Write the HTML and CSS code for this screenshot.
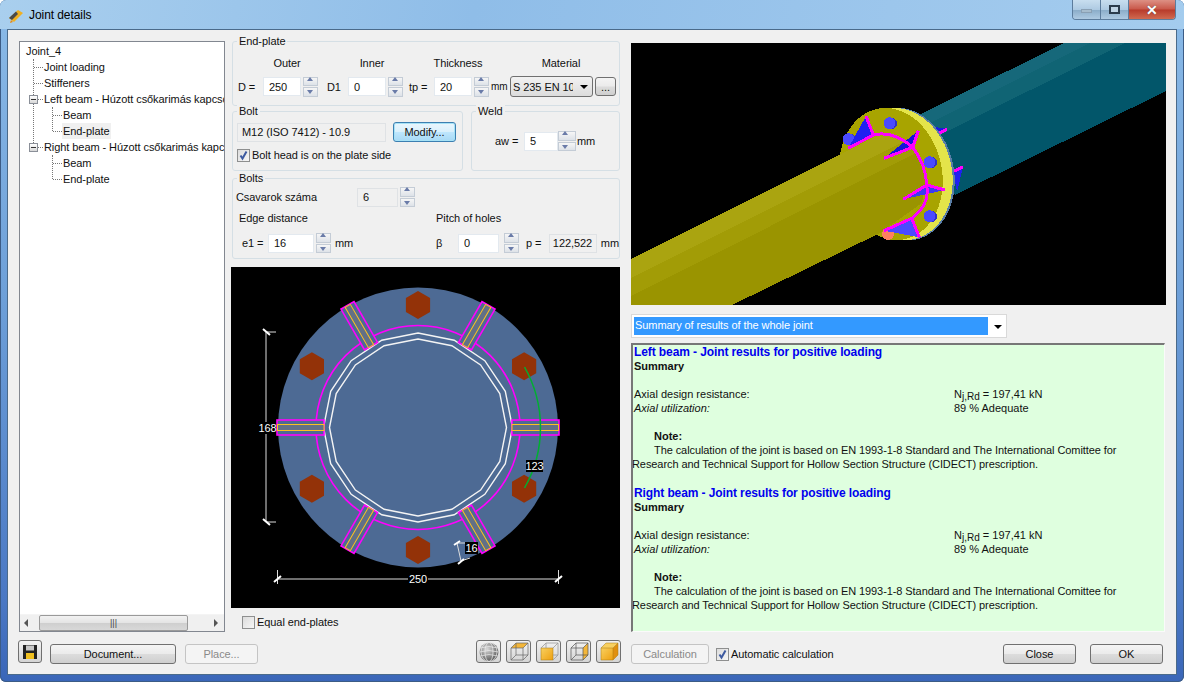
FILE: index.html
```html
<!DOCTYPE html>
<html lang="en">
<head>
<meta charset="utf-8">
<title>Joint details</title>
<link rel="stylesheet" href="styles.css">
</head>
<body>
<div class="window">
  <header class="titlebar">
    <svg class="app-icon" width="16" height="16" viewBox="0 0 16 16"><path d="M1 10 L10 2 L15 5 L6 14 Z" fill="#f0b020"/><path d="M1 10 L8 3.5 L10 6 L4 12 Z" fill="#4a4a4a"/><path d="M3 12 L5 14 L2 15 Z" fill="#e88a10"/></svg>
    <span class="title">Joint details</span>
    <div class="caption">
      <span class="cap cap-min"><i></i></span>
      <span class="cap cap-max"><i></i></span>
      <span class="cap cap-close">✕</span>
    </div>
  </header>
  <div class="client">
    <div class="main">
      <section class="tree">
        <div class="tree-body">
          <div class="node root">Joint_4</div>
          <ul class="lvl1">
            <li class="node">Joint loading</li>
            <li class="node">Stiffeners</li>
            <li class="node open"><span class="minus"></span>Left beam - Húzott csőkarimás kapcsolat</li>
            <li class="sub"><ul class="lvl2">
              <li class="node">Beam</li>
              <li class="node"><span class="selected">End-plate</span></li>
            </ul></li>
            <li class="node open"><span class="minus"></span>Right beam - Húzott csőkarimás kapcsolat</li>
            <li class="sub last"><ul class="lvl2">
              <li class="node">Beam</li>
              <li class="node">End-plate</li>
            </ul></li>
          </ul>
        </div>
        <div class="hscroll">
          <span class="arr arr-l"></span>
          <span class="thumb">|||</span>
          <span class="arr arr-r"></span>
        </div>
      </section>

      <section class="middle">
        <fieldset class="group g-end">
          <span class="legend">End-plate</span>
          <div class="heads">
            <span class="h-outer">Outer</span><span class="h-inner">Inner</span><span class="h-thick">Thickness</span><span class="h-mat">Material</span>
          </div>
          <div class="row r-end">
            <label class="l-d">D =</label>
            <input class="inp i38" value="250"><span class="spin"><b class="up"></b><b class="dn"></b></span>
            <label class="l-d1">D1</label>
            <input class="inp i38" value="0"><span class="spin"><b class="up"></b><b class="dn"></b></span>
            <label class="l-tp">tp =</label>
            <input class="inp i38" value="20"><span class="spin"><b class="up"></b><b class="dn"></b></span>
            <label class="l-mm">mm</label>
            <span class="combo-mat"><span class="combo-text">S 235 EN 10025</span><i class="caret"></i></span>
            <button class="btn dots">...</button>
          </div>
        </fieldset>

        <div class="pair">
          <fieldset class="group g-bolt">
            <span class="legend">Bolt</span>
            <div class="row">
              <span class="field f-bolt">M12 (ISO 7412) - 10.9</span>
              <button class="btn modify">Modify...</button>
            </div>
            <label class="check c-bolt"><span class="box"><svg class="tick" width="11" height="11" viewBox="0 0 11 11"><path d="M2.500 5.500 L4.500 8.500 L8.500 1.500"/></svg></span>Bolt head is on the plate side</label>
          </fieldset>
          <fieldset class="group g-weld">
            <span class="legend">Weld</span>
            <div class="row">
              <label class="l-aw">aw =</label>
              <input class="inp i34" value="5"><span class="spin spin-tight"><b class="up"></b><b class="dn"></b></span>
              <label class="l-mm2">mm</label>
            </div>
          </fieldset>
        </div>

        <fieldset class="group g-bolts">
          <span class="legend">Bolts</span>
          <div class="row r-count">
            <label class="l-count">Csavarok száma</label>
            <span class="field f-count">6</span><span class="spin"><b class="up"></b><b class="dn"></b></span>
          </div>
          <div class="row r-sub">
            <span class="s-edge">Edge distance</span><span>Pitch of holes</span>
          </div>
          <div class="row r-e1">
            <label class="l-e1">e1 =</label>
            <input class="inp i46" value="16"><span class="spin"><b class="up"></b><b class="dn"></b></span>
            <label class="l-mm3">mm</label>
            <label class="l-beta">β</label>
            <input class="inp i41" value="0"><span class="spin spin-wide"><b class="up"></b><b class="dn"></b></span>
            <label class="l-p">p =</label>
            <span class="field f-p">122,522</span>
            <label class="l-mm4">mm</label>
          </div>
        </fieldset>

        <svg class="plate" width="389" height="341" viewBox="231 267 389 341">
          <defs>
            <g id="stiff">
              <rect x="512" y="420" width="47" height="15" fill="#4d6a94" stroke="#ff00ff" stroke-width="1.600"/>
              <rect x="512" y="424.500" width="46.500" height="6" fill="#627086" stroke="#ffc020" stroke-width="1"/>
            </g>
            <polygon id="hex" points="0,-14 12.1,-7 12.1,7 0,14 -12.1,7 -12.1,-7" fill="#933208"/>
          </defs>
          <rect x="231" y="267" width="389" height="341" fill="#000"/>
          <circle cx="418" cy="427.500" r="140" fill="#4d6a94"/>
          <circle cx="418" cy="427.500" r="102" fill="none" stroke="#ff00ff" stroke-width="1.600"/>
          <polygon class="white-line" points="418,333 454.2,340.2 484.8,360.7 505.3,391.3 512.5,427.5 505.3,463.7 484.8,494.3 454.2,514.8 418,522 381.8,514.8 351.2,494.3 330.7,463.7 323.5,427.5 330.7,391.3 351.2,360.7 381.8,340.2"/>
          <polygon class="white-line" points="418,339 451.9,345.7 480.6,364.9 499.8,393.6 506.5,427.5 499.8,461.4 480.6,490.1 451.9,509.3 418,516 384.1,509.3 355.4,490.1 336.2,461.4 329.5,427.5 336.2,393.6 355.4,364.9 384.1,345.7"/>
          <use href="#stiff"/>
          <use href="#stiff" transform="rotate(60 418 427.5)"/>
          <use href="#stiff" transform="rotate(120 418 427.5)"/>
          <use href="#stiff" transform="rotate(180 418 427.5)"/>
          <use href="#stiff" transform="rotate(240 418 427.5)"/>
          <use href="#stiff" transform="rotate(300 418 427.5)"/>
          <use href="#hex" x="418" y="305"/>
          <use href="#hex" x="524.1" y="366.2"/>
          <use href="#hex" x="524.1" y="488.8"/>
          <use href="#hex" x="418" y="550"/>
          <use href="#hex" x="311.9" y="488.8"/>
          <use href="#hex" x="311.9" y="366.2"/>
          <path d="M524.500 367 A122.500 122.500 0 0 1 524.500 488" fill="none" stroke="#00b030" stroke-width="1.500"/>
          <g class="dim">
            <path d="M266 332 V522 M266 332 H276 M266 522 H276"/>
            <path d="M277.500 579 H558.500 M277.500 570 V584 M558.500 570 V584"/>
            <path d="M457 543 L461 561 M457 543 H465 M461 561 L470 558"/>
          </g>
          <g class="ticks">
            <path d="M263 329 L270 335 M263 519 L270 525"/>
            <path d="M274 582 L281 576 M555 582 L562 576"/>
            <path d="M454 545 L460 541 M458 564 L464 559"/>
          </g>
          <rect class="lbl-bg" x="259" y="422" width="17" height="12"/>
          <text class="lbl" x="267.500" y="432" text-anchor="middle">168</text>
          <rect class="lbl-bg" x="408" y="573" width="20" height="12"/>
          <text class="lbl" x="418" y="583" text-anchor="middle">250</text>
          <rect class="lbl-bg" x="526" y="460" width="17" height="12"/>
          <text class="lbl" x="534.500" y="470" text-anchor="middle">123</text>
          <rect class="lbl-bg" x="465" y="542" width="13" height="12"/>
          <text class="lbl" x="471.500" y="552" text-anchor="middle">16</text>
        </svg>

        <label class="check c-equal"><span class="box"></span>Equal end-plates</label>
      </section>

      <section class="right">
        <svg class="view3d" width="535" height="262" viewBox="631 43 535 262">
          <rect x="631" y="43" width="535" height="262" fill="#000"/>
          <polygon points="916.700,116 1064,43 1166,43 1166,91 955,195" fill="#02566a"/>
          <polygon points="916.700,116 1064,43 1125,43 930,140" fill="#106474"/>
          <polygon points="916.700,116 1064,43 1090,43 922,127" fill="#16687a"/>
          <polygon points="930,127 945,128 936,135" fill="#1a1ae0"/>
          <polygon points="953,170 963,167 957,192" fill="#2020f0"/>
          <path d="M936 135 L947 129 M954 171 L963 167" stroke="#ff00ff" stroke-width="3"/>
          <ellipse cx="902" cy="174" rx="52" ry="67" transform="rotate(-12 902 174)" fill="#5a7ea8"/>
          <ellipse cx="900" cy="174" rx="52" ry="66.600" transform="rotate(-12 900 174)" fill="#e4e44a"/>
          <ellipse cx="891" cy="174" rx="51" ry="66.600" transform="rotate(-12 891 174)" fill="#a8a400"/>
          <circle cx="850" cy="139.500" r="6" fill="#3030c8"/><circle cx="848.500" cy="139.300" r="6" fill="#4a4aff"/>
          <circle cx="891" cy="123.500" r="6" fill="#3030c8"/><circle cx="889.500" cy="123.300" r="6" fill="#4a4aff"/>
          <circle cx="931" cy="162.500" r="6" fill="#3030c8"/><circle cx="929.500" cy="162.300" r="6" fill="#4a4aff"/>
          <circle cx="931" cy="216.500" r="6" fill="#3030c8"/><circle cx="929.500" cy="216.300" r="6" fill="#4a4aff"/>
          <circle cx="888" cy="234" r="6" fill="#ff8060"/>
          <polygon points="631,259 875,137 893,133 913,147 926,177 922,203 880,233 732,305 631,305" fill="#9a9400"/>
          <polygon points="631,259 875,137 893,133 913,147 918,152 631,296" fill="#a29c06"/>
          <polygon points="631,259 875,137 893,133 905,141 631,278" fill="#aaa410"/>
          <polygon points="866,116 873.300,135 848.300,148.300" fill="#2020f0"/>
          <polygon points="918.300,130.700 912.700,147.300 884,158.300" fill="#1414d8"/>
          <polygon points="945,190 926.700,185 903.300,199.300" fill="#3a3af0"/>
          <polygon points="911.700,218.300 919.300,237.300 884,230.700" fill="#4a4aff"/>
          <g class="weld">
            <path d="M866 116 L873.300 135 L848.300 148.300"/>
            <path d="M918.300 130.700 L912.700 147.300 L884 158.300"/>
            <path d="M945 190 L926.700 185 L903.300 199.300"/>
            <path d="M911.700 218.300 L919.300 237.300 M911.700 218.300 L884 230.700"/>
            <path d="M873.300 135 Q893 130 912.700 147.300 Q926 165 926.700 185 Q930 205 911.700 218.300"/>
          </g>
        </svg>

        <div class="summary-combo">
          <span class="summary-sel">Summary of results of the whole joint</span>
          <i class="caret"></i>
        </div>

        <article class="results">
          <h2>Left beam - Joint results for positive loading</h2>
          <h3>Summary</h3>
          <div class="res-row res-gap"><span>Axial design resistance:</span><span>N<sub>j,Rd</sub> = 197,41 kN</span></div>
          <div class="res-row"><em>Axial utilization:</em><span>89 % Adequate</span></div>
          <h3 class="note">Note:</h3>
          <p>The calculation of the joint is based on EN 1993-1-8 Standard and The International Comittee for Research and Technical Support for Hollow Section Structure (CIDECT) prescription.</p>
          <h2 class="second">Right beam - Joint results for positive loading</h2>
          <h3>Summary</h3>
          <div class="res-row res-gap"><span>Axial design resistance:</span><span>N<sub>j,Rd</sub> = 197,41 kN</span></div>
          <div class="res-row"><em>Axial utilization:</em><span>89 % Adequate</span></div>
          <h3 class="note">Note:</h3>
          <p>The calculation of the joint is based on EN 1993-1-8 Standard and The International Comittee for Research and Technical Support for Hollow Section Structure (CIDECT) prescription.</p>
        </article>
      </section>
    </div>

    <footer class="footer">
      <button class="iconbtn save">
        <svg width="16" height="16" viewBox="0 0 16 16"><path d="M1 1 H15 V15 H1 Z" fill="#222"/><rect x="4" y="1.500" width="8" height="5" fill="#c8c8c8"/><rect x="4" y="9" width="8" height="6" fill="#f0c020"/></svg>
      </button>
      <button class="btn b-doc">Document...</button>
      <button class="btn b-place" disabled>Place...</button>
      <div class="views">
        <button class="iconbtn">
          <svg width="20" height="20" viewBox="0 0 20 20"><defs><radialGradient id="sph" cx="0.4" cy="0.35" r="0.7"><stop offset="0" stop-color="#d8d8d8"/><stop offset="1" stop-color="#555"/></radialGradient></defs><circle cx="10" cy="10" r="9.500" fill="url(#sph)"/><g fill="none" stroke="#eee" stroke-width="0.7"><ellipse cx="10" cy="10" rx="4" ry="9.500"/><ellipse cx="10" cy="10" rx="8" ry="9.500"/><path d="M1 6 Q10 3 19 6 M0.500 10 Q10 7 19.500 10 M1 14 Q10 11 19 14"/></g></svg>
        </button>
        <button class="iconbtn">
          <svg width="20" height="20" viewBox="0 0 20 20"><polygon points="2,6 7,1 19,1 14,6" fill="#f3b63a"/><path d="M2 6 H14 V18 H2 Z M14 6 L19 1 V13 L14 18 M2 6 L7 1 H19 M7 1 V13 H19 M2 18 L7 13" fill="none" stroke="#666" stroke-width="0.7"/></svg>
        </button>
        <button class="iconbtn">
          <svg width="20" height="20" viewBox="0 0 20 20"><defs><linearGradient id="gold" x1="0" y1="0" x2="1" y2="1"><stop offset="0" stop-color="#f8d060"/><stop offset="1" stop-color="#eea010"/></linearGradient></defs><rect x="2" y="6" width="12" height="12" fill="url(#gold)" stroke="#a87810" stroke-width="0.5"/><path d="M2 6 L7 1 H19 V13 L14 18 M14 6 L19 1 M7 1 V6 M14 13 H19" fill="none" stroke="#999" stroke-width="0.8"/></svg>
        </button>
        <button class="iconbtn">
          <svg width="20" height="20" viewBox="0 0 20 20"><polygon points="14,6 19,1 19,13 14,18" fill="#f3b63a"/><path d="M2 6 H14 V18 H2 Z M14 6 L19 1 V13 L14 18 M2 6 L7 1 H19 M7 1 V13 H19 M2 18 L7 13" fill="none" stroke="#555" stroke-width="0.7"/></svg>
        </button>
        <button class="iconbtn">
          <svg width="20" height="20" viewBox="0 0 20 20"><polygon points="2,6 7,1 19,1 14,6" fill="#f8d060"/><polygon points="14,6 19,1 19,13 14,18" fill="#e09010"/><rect x="2" y="6" width="12" height="12" fill="url(#gold)"/><path d="M2 6 L7 1 H19 V13 L14 18 H2 Z M2 6 H14 V18 M14 6 L19 1" fill="none" stroke="#a87810" stroke-width="0.5"/></svg>
        </button>
      </div>
      <button class="btn b-calc" disabled>Calculation</button>
      <label class="check c-auto"><span class="box"><svg class="tick" width="11" height="11" viewBox="0 0 11 11"><path d="M2.500 5.500 L4.500 8.500 L8.500 1.500"/></svg></span>Automatic calculation</label>
      <button class="btn b-close">Close</button>
      <button class="btn b-ok">OK</button>
    </footer>
  </div>
</div>
</body>
</html>
```

FILE: styles.css
```css
* { box-sizing: border-box; }
html, body { margin: 0; padding: 0; }
body { width: 1184px; height: 682px; overflow: hidden; background: #fff; font: 11px "Liberation Sans", Arial, sans-serif; letter-spacing: -0.07px; color: #111; }
input, button { font: inherit; color: inherit; margin: 0; letter-spacing: inherit; }
label { display: block; }

.window { width: 1184px; height: 682px; display: flex; flex-direction: column; border-radius: 6px; overflow: hidden; box-shadow: inset 0 0 0 1px #3c5c86;
  background: linear-gradient(180deg, #a9cfee 0, #88b8e6 28px, #6d9fd8 300px, #4a78c4 600px, #3a66b8 682px); }

.titlebar { height: 29px; flex: none; display: flex; align-items: flex-start; position: relative;
  background: linear-gradient(100deg, #a9cfee 0, #8fbde8 40%, #9cc6ec 75%, #a4ccee 100%); }
.app-icon { margin: 8px 0 0 8px; }
.title { margin: 8px 0 0 5px; font-size: 12px; line-height: 15px; color: #000; }
.caption { margin: 0 8px 0 auto; display: flex; height: 20px; border: 1px solid #5c7c9c; border-top: 0; border-radius: 0 0 4px 4px; overflow: hidden; }
.cap { display: flex; align-items: center; justify-content: center; }
.cap-min, .cap-max { width: 28px; border-right: 1px solid #5c7c9c; background: linear-gradient(180deg, #c8deef 0, #aecae2 50%, #8aacc8 52%, #aecae2 100%); }
.cap-min i { width: 11px; height: 4px; background: #a6bccd; border: 1px solid #8aa0b4; margin-top: 2px; }
.cap-max i { width: 11px; height: 9px; border: 2px solid #2c3c4c; background: #c0d4e4; }
.cap-close { width: 46px; color: #fff; font-size: 14px; font-weight: bold; text-shadow: 0 0 1px #333;
  background: linear-gradient(180deg, #dd9084 0, #c9584a 48%, #b83a2a 52%, #d06a50 100%); }

.client { flex: 1; margin: 0 7px 7px; background: #f0f0f0; border: 1px solid #4a6a8a; padding: 11px 13px 0 11px; }
.main { display: grid; grid-template-columns: 206px 396px 545px; column-gap: 0; height: 591px; }

/* tree */
.tree { display: flex; flex-direction: column; background: #fff; border: 1px solid #828790; height: 591px; width: 206px; }
.tree-body { flex: 1; overflow: hidden; white-space: nowrap; padding-top: 1px; }
.tree ul { list-style: none; margin: 0; padding: 0; }
.node { height: 16px; line-height: 16px; position: relative; }
.root { padding-left: 6px; }
.lvl1 { padding-left: 24px !important; position: relative; }
.lvl1::before { content: ""; position: absolute; left: 13px; top: 0; height: 88px; border-left: 1px dotted #777; }
.lvl1 > .node::before { content: ""; position: absolute; left: -10px; top: 8px; width: 9px; border-top: 1px dotted #777; }
.lvl2 { padding-left: 19px !important; position: relative; }
.lvl2::before { content: ""; position: absolute; left: 8px; top: 0; height: 24px; border-left: 1px dotted #777; }
.lvl2 > .node::before { content: ""; position: absolute; left: -10px; top: 8px; width: 9px; border-top: 1px dotted #777; }
.minus { position: absolute; left: -15px; top: 4px; width: 9px; height: 9px; border: 1px solid #8a8f98; background: linear-gradient(#fff, #d8d8d8); z-index: 1; }
.minus::after { content: ""; position: absolute; left: 1px; top: 3px; width: 5px; height: 1px; background: #333; }
.selected { background: #f0f0f0; display: inline-block; padding: 0 2px 0 1px; margin-left: -1px; }

.hscroll { flex: none; height: 17px; background: #f0f0f0; display: flex; align-items: center; position: relative; border-top: 1px solid #f4f4f4; }
.thumb { position: absolute; left: 19px; width: 149px; height: 16px; top: 0; border: 1px solid #9a9a9a; border-radius: 2px; text-align: center; font-size: 9px; line-height: 14px; color: #444;
  background: linear-gradient(180deg, #f2f2f2 0, #e4e4e4 50%, #cfcfcf 52%, #d8d8d8 100%); }
.arr { position: absolute; top: 4px; width: 0; height: 0; border: 4px solid transparent; }
.arr-l { left: 4px; border-left: 0; border-right-color: #555; }
.arr-r { right: 6px; border-right: 0; border-left-color: #555; }

/* form column */
.middle { display: flex; flex-direction: column; padding-left: 6px; }
.group { position: relative; margin: 0 0 0 1px; border: 1px solid #d5dfe5; border-radius: 3px; padding: 0; min-width: 0; flex: none; }
.legend { position: absolute; left: 4px; top: -7px; background: #f0f0f0; padding: 0 2px; line-height: 13px; }
.row { display: flex; align-items: center; }

.g-end { width: 388px; height: 65px; padding-top: 14px; }
.heads { display: flex; height: 14px; line-height: 14px; text-align: center; }
.h-outer { width: 108px; }
.h-inner { width: 62px; }
.h-thick { width: 110px; }
.h-mat { width: 96px; }
.r-end { margin-top: 6px; padding-left: 5px; }

.inp { height: 19px; border: 1px solid #e3e9ef; background: #fff; padding: 0 0 0 5px; outline: 0; }
.i38 { width: 38px; }
.i34 { width: 34px; }
.i46 { width: 46px; }
.i41 { width: 41px; }
.spin { flex: none; width: 15px; height: 20px; margin-left: 2px; display: flex; flex-direction: column; gap: 1px; padding: 0; }
.spin b { display: block; flex: 1; border: 1px solid #c4ccd6; background: linear-gradient(#f6f6f6, #dde2e8); position: relative; }
.spin b::after { content: ""; position: absolute; left: 3px; width: 0; height: 0; border: 3px solid transparent; }
.spin .up::after { top: -1px; border-top: 0; border-bottom: 4px solid #6a7ba8; }
.spin .dn::after { top: 2px; border-bottom: 0; border-top: 4px solid #6a7ba8; }
.spin-tight { margin-left: 0; width: 18px; }
.spin-wide { margin-left: 5px; }
.l-d { width: 25px; }
.l-d1 { width: 30px; padding-left: 9px; }
.l-tp { width: 31px; padding-left: 6px; }
.l-mm { width: 21px; padding-left: 2px; font-size: 10px; }
.combo-mat { width: 83px; height: 21px; border: 1px solid #707070; border-radius: 3px; background: linear-gradient(#f2f2f2, #dcdcdc); display: flex; align-items: center; padding-left: 2px; position: relative; overflow: hidden; }
.combo-text { width: 60px; overflow: hidden; white-space: nowrap; }
.caret { display: block; width: 0; height: 0; border: 4px solid transparent; border-bottom: 0; border-top: 4px solid #000; }
.combo-mat .caret { position: absolute; right: 4px; top: 8px; }
.btn { height: 20px; padding: 0; border: 1px solid #707070; border-radius: 3px; background: linear-gradient(180deg, #f4f4f4 0, #ebebeb 48%, #dcdcdc 52%, #cfcfcf 100%); }
.btn:disabled { border-color: #c4c4c4; background: #f4f4f4; color: #8a8a8a; }
.dots { width: 21px; height: 19px; margin-left: 2px; line-height: 12px; }

.pair { display: flex; margin-top: 5px; flex: none; }
.g-bolt { width: 231px; height: 60px; padding: 10px 0 0 4px; }
.f-bolt { width: 149px; padding-left: 4px; }
.field { height: 19px; line-height: 17px; border: 1px solid #dfe2e5; background: #f0f0f0; display: block; }
.modify { width: 63px; margin-left: 7px; border-color: #3c7fb1; box-shadow: inset 0 0 0 1px #a6e2f6; background: linear-gradient(180deg, #eaf6fd 0, #d9f0fc 48%, #bee6fd 52%, #a7d9f5 100%); }
.check { display: flex; align-items: center; line-height: 13px; }
.box { flex: none; width: 13px; height: 13px; border: 1px solid #8e8f8f; background: linear-gradient(135deg, #dcdcdc, #f6f6f6); margin-right: 2px; display: block; }
.tick { display: block; fill: none; stroke: #3d5aa0; stroke-width: 2; }
.c-bolt { margin: 7px 0 0 0; }
.g-weld { width: 149px; height: 60px; margin-left: 8px; padding: 19px 0 0 23px; }
.l-aw { width: 29px; }
.l-mm2 { padding-left: 1px; }

.g-bolts { width: 388px; height: 81px; margin-top: 7px; padding: 8px 0 0 3px; }
.l-count { width: 121px; }
.f-count { width: 41px; padding-left: 5px; }
.r-sub { margin-top: 4px; height: 14px; }
.s-edge { width: 200px; padding-left: 3px; }
.r-e1 { margin-top: 8px; padding-left: 6px; }
.l-e1 { width: 26px; }
.l-mm3 { width: 105px; padding-left: 4px; }
.l-beta { width: 22px; }
.l-p { width: 30px; padding-left: 7px; }
.f-p { width: 48px; padding-left: 3px; }
.l-mm4 { padding-left: 4px; }

.plate { display: block; margin-top: 8px; flex: none; }
.white-line { fill: none; stroke: #f4f4f4; stroke-width: 1.400; }
.dim { fill: none; stroke: #ddd; stroke-width: 1; }
.ticks { fill: none; stroke: #fff; stroke-width: 2; }
.lbl-bg { fill: #000; }
.lbl { fill: #fff; font: 11px "Liberation Sans", Arial, sans-serif; }
.weld { fill: none; stroke: #ff00ff; stroke-width: 3; }
.c-equal { margin: 8px 0 0 11px; }

/* right column */
.right { display: flex; flex-direction: column; padding-left: 10px; }
.view3d { display: block; margin-top: 2px; flex: none; shape-rendering: crispEdges; }
.summary-combo { margin-top: 9px; width: 376px; height: 24px; flex: none; background: #fff; border: 1px solid #d9d9d9; padding: 2px 0 0 2px; display: flex; position: relative; }
.summary-sel { width: 354px; height: 18px; line-height: 17px; background: #3399ff; color: #fff; padding-left: 1px; }
.summary-combo .caret { position: absolute; right: 4px; top: 10px; }
.results { margin-top: 5px; width: 534px; height: 289px; flex: none; overflow: hidden; background: #dfffdf; border: 1px solid #fafafa; border-top: 2px solid #777; border-left: 2px solid #777; padding: 0 0 0 1px; line-height: 14px; font-size: 11px; letter-spacing: 0; }
.results h2 { margin: 0; font-size: 12px; line-height: 14px; color: #0000ee; font-weight: bold; letter-spacing: -0.1px; }
.results h3 { margin: 0; font-size: 11px; line-height: 14px; font-weight: bold; }
.results h3.note { margin: 14px 0 0 20px; }
.results h2.second { margin-top: 15px; }
.results p { margin: 0 0 0 -2px; text-indent: 22px; width: 495px; letter-spacing: -0.08px; }
.res-row { display: flex; }
.res-row > :first-child { width: 320px; }
.res-gap { margin-top: 14px; }
.results sub { font-size: 10px; line-height: 0; vertical-align: -2px; }

/* footer */
.footer { display: flex; align-items: flex-end; height: 24px; margin-top: 8px; }
.iconbtn { width: 25px; height: 23px; padding: 0; border: 1px solid #707070; border-radius: 3px; background: linear-gradient(#f2f2f2, #d4d4d4); display: flex; align-items: center; justify-content: center; }
.save { margin-left: -1px; width: 24px; align-self: flex-start; }
.b-doc { width: 126px; margin-left: 8px; }
.b-place { width: 73px; margin-left: 9px; }
.views { display: flex; gap: 5px; margin-left: 218px; align-self: flex-start; }
.b-calc { width: 78px; margin-left: 10px; }
.c-auto { margin: 0 0 3px 7px; }
.b-close { width: 73px; margin-left: auto; }
.b-ok { width: 73px; margin-left: 14px; }
```
